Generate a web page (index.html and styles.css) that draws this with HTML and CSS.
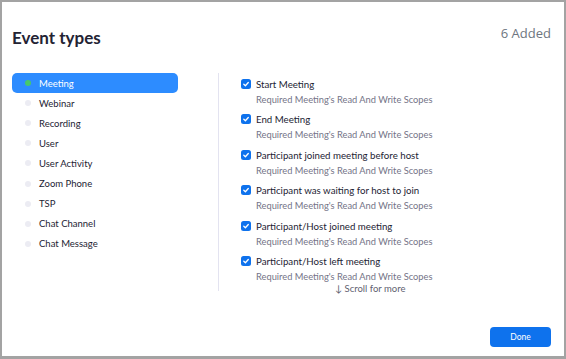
FILE: index.html
```html
<!DOCTYPE html>
<html>
<head>
<meta charset="utf-8">
<link rel="stylesheet" href="styles.css">
</head>
<body>
<div class="dialog">
  <header class="head">
    <h1 class="title">Event types</h1>
    <span class="count">6 Added</span>
  </header>
  <div class="body">
    <ul class="side">
      <li class="side-item active"><span class="dot"></span>Meeting</li>
      <li class="side-item"><span class="dot"></span>Webinar</li>
      <li class="side-item"><span class="dot"></span>Recording</li>
      <li class="side-item"><span class="dot"></span>User</li>
      <li class="side-item"><span class="dot"></span>User Activity</li>
      <li class="side-item"><span class="dot"></span>Zoom Phone</li>
      <li class="side-item"><span class="dot"></span>TSP</li>
      <li class="side-item"><span class="dot"></span>Chat Channel</li>
      <li class="side-item"><span class="dot"></span>Chat Message</li>
    </ul>
    <div class="main">
      <ul class="events">
        <li class="event"><span class="check"><svg viewBox="0 0 10 10"><path d="M2.8 5.2 L4.4 6.7 L7.3 3.5" /></svg></span><div><div class="ev-title">Start Meeting</div><div class="ev-sub">Required Meeting's Read And Write Scopes</div></div></li>
        <li class="event"><span class="check"><svg viewBox="0 0 10 10"><path d="M2.8 5.2 L4.4 6.7 L7.3 3.5" /></svg></span><div><div class="ev-title">End Meeting</div><div class="ev-sub">Required Meeting's Read And Write Scopes</div></div></li>
        <li class="event"><span class="check"><svg viewBox="0 0 10 10"><path d="M2.8 5.2 L4.4 6.7 L7.3 3.5" /></svg></span><div><div class="ev-title">Participant joined meeting before host</div><div class="ev-sub">Required Meeting's Read And Write Scopes</div></div></li>
        <li class="event"><span class="check"><svg viewBox="0 0 10 10"><path d="M2.8 5.2 L4.4 6.7 L7.3 3.5" /></svg></span><div><div class="ev-title">Participant was waiting for host to join</div><div class="ev-sub">Required Meeting's Read And Write Scopes</div></div></li>
        <li class="event"><span class="check"><svg viewBox="0 0 10 10"><path d="M2.8 5.2 L4.4 6.7 L7.3 3.5" /></svg></span><div><div class="ev-title">Participant/Host joined meeting</div><div class="ev-sub">Required Meeting's Read And Write Scopes</div></div></li>
        <li class="event"><span class="check"><svg viewBox="0 0 10 10"><path d="M2.8 5.2 L4.4 6.7 L7.3 3.5" /></svg></span><div><div class="ev-title">Participant/Host left meeting</div><div class="ev-sub">Required Meeting's Read And Write Scopes</div></div></li>
      </ul>
      <div class="more">↓ Scroll for more</div>
    </div>
  </div>
  <footer class="foot">
    <button class="done">Done</button>
  </footer>
</div>
</body>
</html>
```
FILE: styles.css
```css
* { box-sizing: border-box; }
html, body { margin: 0; padding: 0; background: #fff; }
body { font-family: Lato, "Open Sans", sans-serif; color: #232333; }
.dialog {
  width: 566px;
  height: 359px;
  border: 2px solid #a3a3a3;
  border-bottom-width: 3px;
  padding: 0 13px 0 10px;
  display: flex;
  flex-direction: column;
}
.head {
  display: flex;
  justify-content: space-between;
  align-items: flex-start;
  padding-top: 22px;
  height: 71px;
}
.title {
  margin: 2px 0 0;
  font-size: 17px;
  line-height: 24px;
  font-weight: 700;
  color: #232333;
}
.count {
  font-size: 13px;
  line-height: 20px;
  color: #6e7680;
  font-family: "Open Sans", sans-serif;
  margin-top: -1px;
}
.body {
  display: flex;
  height: 218px;
}
.side {
  list-style: none;
  margin: 0;
  padding: 0 40px 0 0;
  width: 207px;
  border-right: 1px solid #e3e3f0;
  height: 218px;
}
.side-item {
  display: flex;
  align-items: center;
  height: 20.1px;
  padding-left: 13px;
  font-size: 9.5px;
  color: #232333;
  border-radius: 5px;
}
.side-item.active {
  background: #2d8cff;
  color: #fff;
}
.dot {
  width: 6px;
  height: 6px;
  border-radius: 50%;
  background: #ececf3;
  margin-right: 8px;
  flex: none;
}
.active .dot { background: #47c86b; }
.main {
  padding-left: 22px;
  padding-top: 3px;
  flex: 1;
}
.events { list-style: none; margin: 0; padding: 0; }
.event {
  display: flex;
  align-items: flex-start;
  height: 35.4px;
}
.check {
  width: 10px;
  height: 10px;
  border-radius: 2.5px;
  background: #0e72ed;
  margin-top: 3px;
  margin-right: 5px;
  flex: none;
  display: flex;
}
.check svg { width: 10px; height: 10px; }
.check path { fill: none; stroke: #fff; stroke-width: 1.3; stroke-linecap: round; stroke-linejoin: round; }
.ev-title { font-size: 9.7px; line-height: 16px; color: #232333; }
.ev-sub { font-size: 9.3px; line-height: 16px; color: #747487; }
.more {
  margin-top: -5px;
  padding-left: 94px;
  font-size: 9.5px;
  line-height: 12px;
  color: #5f5f70;
}
.foot {
  display: flex;
  justify-content: flex-end;
  padding-top: 36px;
}
.done {
  width: 61px;
  height: 20px;
  border: none;
  border-radius: 4px;
  background: #0e72ed;
  color: #fff;
  font-family: Lato, sans-serif;
  font-size: 8.5px;
  padding: 0;
}
```
